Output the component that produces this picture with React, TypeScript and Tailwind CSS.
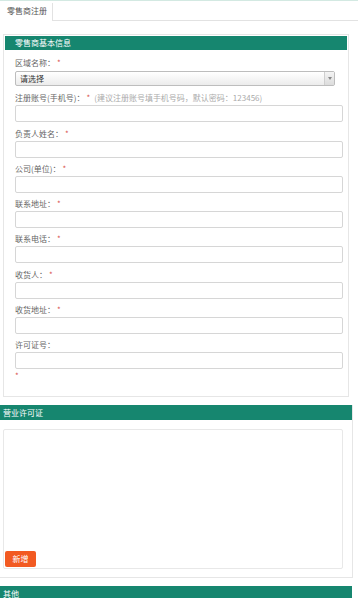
import React from "react";

const fields: { label: string; required: boolean; hint?: string }[] = [
  { label: "注册账号(手机号)：", required: true, hint: "(建议注册账号填手机号码，默认密码：123456)" },
  { label: "负责人姓名：", required: true },
  { label: "公司(单位)：", required: true },
  { label: "联系地址：", required: true },
  { label: "联系电话：", required: true },
  { label: "收货人：", required: true },
  { label: "收货地址：", required: true },
  { label: "许可证号：", required: false },
];

export default function App() {
  return (
    <div
      className="w-[358px] h-[598px] overflow-hidden bg-white text-[8px] text-[#666]"
      style={{ fontFamily: '"Noto Sans CJK SC", "Noto Sans", sans-serif' }}
    >
      {/* tabs */}
      <div className="flex h-[21px] border-t border-[#d3e9e2]">
        <div className="w-[52px] flex items-center pl-[7px] text-[#555] leading-none">零售商注册</div>
        <div className="flex-1 mt-[2px] border-l border-b border-[#e2e2e2]" />
      </div>

      {/* panel 1 */}
      <div className="ml-[3px] mt-[13px] w-[346px] border border-[#e6e6e6] p-[1px]">
        <div className="h-[14px] bg-[#16866f] text-white flex items-center pl-[10px] leading-none">零售商基本信息</div>
        <div className="pl-[10px] pt-[7px] pb-[14px]">
          <div className="h-[35.25px]">
            <div className="h-[12px] leading-[12px]">
              区域名称：<span className="text-[#d9534f] ml-[2px]">*</span>
            </div>
            <div className="mt-[2px] w-[320px] h-[15px] border border-[#bdbdbd] rounded-[2px] bg-gradient-to-b from-[#ffffff] to-[#ececec] flex items-center justify-between">
              <span className="pl-[4px] text-[#333] leading-none">请选择</span>
              <div className="w-[10px] h-[13px] border-l border-[#cfcfcf] bg-gradient-to-b from-[#f4f4f4] to-[#dcdcdc] flex items-center justify-center">
                <span className="block w-0 h-0 border-l-[2px] border-r-[2px] border-t-[3px] border-l-transparent border-r-transparent border-t-[#888]" />
              </div>
            </div>
          </div>
          {fields.map((f) => (
            <div key={f.label} className="h-[35.25px]">
              <div className="h-[12px] leading-[12px] whitespace-nowrap">
                {f.label}
                {f.required && <span className="text-[#d9534f] ml-[2px]">*</span>}
                {f.hint && <span className="text-[#aaa] ml-[4px]">{f.hint}</span>}
              </div>
              <div className="mt-[1px] w-[328px] h-[17px] border border-[#d6d6d6] rounded-[2px] bg-white" />
            </div>
          ))}
          <div className="-mt-[3px] h-[10px] leading-[10px] text-[#d9534f]">*</div>
        </div>
      </div>

      {/* panel 2 */}
      <div className="mt-[8px] w-[353px] border-r border-b border-[#e6e6e6] pb-[8px]">
        <div className="h-[15px] bg-[#16866f] text-white flex items-center pl-[3px] leading-none">营业许可证</div>
        <div className="ml-[3px] mt-[9px] w-[340px] h-[140px] border border-[#e8e8e8] rounded-[2px] flex flex-col justify-end p-[1px]">
          <div className="w-[31px] h-[16px] rounded-[2px] bg-[#f25a22] text-white flex items-center justify-center leading-none">新增</div>
        </div>
      </div>

      {/* panel 3 */}
      <div className="mt-[8px] w-[352px]">
        <div className="h-[15px] bg-[#16866f] text-white flex items-center pl-[3px] leading-none">其他</div>
      </div>
    </div>
  );
}
